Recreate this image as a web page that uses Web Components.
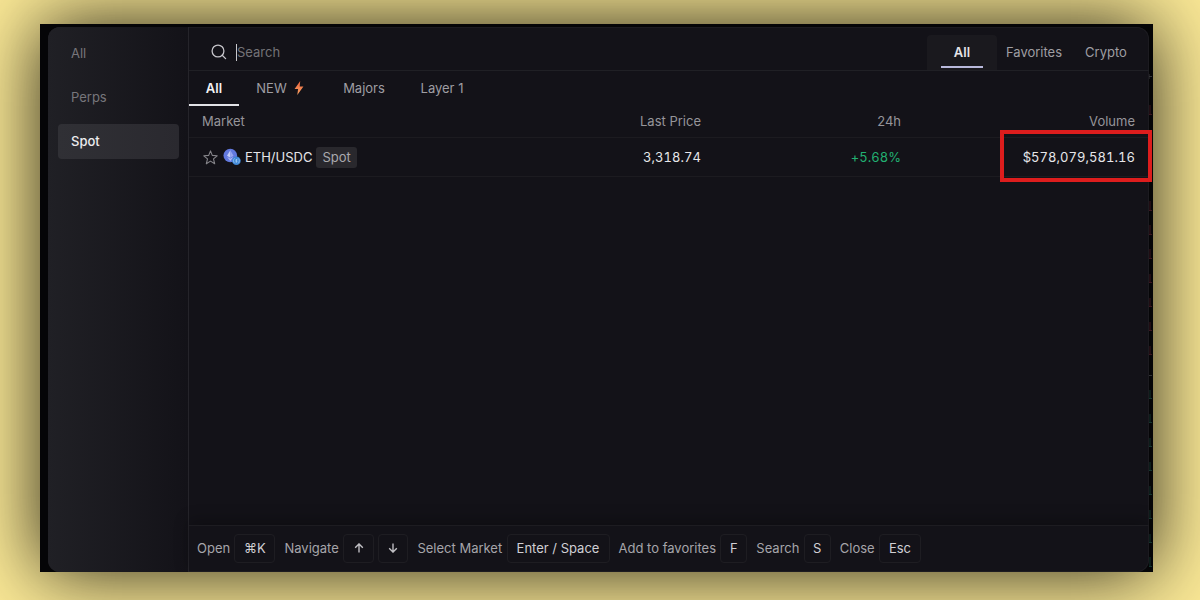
<!DOCTYPE html>
<html lang="en">
<head>
<meta charset="utf-8">
<title>Markets</title>
<style>
    * {
        box-sizing: border-box;
    }
    body {
        margin: 0;
        height: 600px;
        overflow: hidden;
        background: #fbe996;
        font-family: Inter, "Liberation Sans", sans-serif;
        font-size: 13px;
        line-height: 20px;
        color: #9f9ea3;
    }
</style>
</head>
<body>
<app-frame>
    <market-dialog>
        <side-item slot="side">All</side-item>
        <side-item slot="side">Perps</side-item>
        <side-item slot="side" active>Spot</side-item>

        <search-box slot="search" placeholder="Search"></search-box>
        <group-tab slot="groups" active style="width:70px">All</group-tab>
        <group-tab slot="groups" style="width:74px">Favorites</group-tab>
        <group-tab slot="groups" style="width:70px">Crypto</group-tab>

        <filter-tab slot="filters" active style="width:50px">All</filter-tab>
        <filter-tab slot="filters" style="width:82px" hot>NEW</filter-tab>
        <filter-tab slot="filters" style="width:86px">Majors</filter-tab>
        <filter-tab slot="filters" style="width:70px">Layer 1</filter-tab>

        <market-row head>
            <span slot="name">Market</span>
            <span slot="price">Last Price</span>
            <span slot="change">24h</span>
            <span slot="volume">Volume</span>
        </market-row>
        <market-row>
            <market-name slot="name" tag="Spot">ETH/USDC</market-name>
            <span slot="price">3,318.74</span>
            <span slot="change">+5.68%</span>
            <span slot="volume">$578,079,581.16</span>
        </market-row>

        <key-hint slot="keys" keys="⌘K" widths="41">Open</key-hint>
        <key-hint slot="keys" keys="up,down" widths="31,30">Navigate</key-hint>
        <key-hint slot="keys" keys="Enter / Space" widths="103">Select Market</key-hint>
        <key-hint slot="keys" keys="F" widths="27">Add to favorites</key-hint>
        <key-hint slot="keys" keys="S" widths="27">Search</key-hint>
        <key-hint slot="keys" keys="Esc" widths="42">Close</key-hint>
    </market-dialog>
</app-frame>

<script>
class AppFrame extends HTMLElement {

    constructor() {
        super();
        this.shadowDOM = this.attachShadow({mode: "open"});
    }

    connectedCallback() {
        this.render();
    }

    render() {
        this.shadowDOM.innerHTML = `
            <style>
                :host {
                    display: block;
                    padding: 24px 47.5px 28px 40px;
                    height: 600px;
                    box-sizing: border-box;
                }
                .frame {
                    position: relative;
                    box-sizing: border-box;
                    height: 548px;
                    padding: 3px 3.5px 0 8px;
                    background: #050507;
                    box-shadow: 0 0 72px rgba(0, 0, 0, 0.85);
                }
                /* edge of the order book behind the dialog */
                .book {
                    position: absolute;
                    right: 1px;
                    top: 0;
                    width: 3px;
                    height: 548px;
                }
                .mark {
                    position: absolute;
                    z-index: 2;
                    left: 960px;
                    top: 106px;
                    width: 152px;
                    height: 52px;
                    box-sizing: border-box;
                    border: 4px solid #dd1d1d;
                }
            </style>
            <div class="frame">
                <slot></slot>
                <svg class="book" viewBox="0 0 3 548">
                    <path d="M0 52.500h3M0 50v5" stroke="#36363a" fill="none"/>
                    <path d="M1 81v9M1 177v9M1 201v9M1 225v9M1 250v9M1 274v9M1 298v9M1 322v9M0 90.500h3M0 186.500h3M0 210.500h3M0 234.500h3M0 258.500h3M0 282.500h3M0 306.500h3M0 330.500h3" stroke="#3c1620" fill="none"/>
                    <path d="M0 351.500h3" stroke="#303134"/>
                    <path d="M1 366v9M1 390v9M1 414v9M1 438v9M1 462v9M1 486v9M1 510v9M1 533v9M0 374.500h3M0 398.500h3M0 422.500h3M0 446.500h3M0 470.500h3M0 494.500h3M0 518.500h3M0 542.500h3" stroke="#15352f" fill="none"/>
                </svg>
                <div class="mark"></div>
            </div>`;
    }

}

class MarketDialog extends HTMLElement {

    constructor() {
        super();
        this.shadowDOM = this.attachShadow({mode: "open"});
    }

    connectedCallback() {
        this.render();
    }

    render() {
        this.shadowDOM.innerHTML = `
            <style>
                * {
                    box-sizing: border-box;
                }
                :host {
                    display: grid;
                    grid-template-columns: 141px 1fr;
                    height: 545px;
                    border-radius: 12px;
                    overflow: hidden;
                    background: #131218;
                    box-shadow: inset 0 0 0 1px #1c1b20;
                }
                nav {
                    display: flex;
                    flex-direction: column;
                    gap: 9px;
                    padding: 9px 9px 0 10px;
                    border-right: 1px solid #25242a;
                    background: linear-gradient(90deg, #202025, #131218);
                }
                main {
                    display: flex;
                    flex-direction: column;
                    min-width: 0;
                }
                .top {
                    display: flex;
                    justify-content: space-between;
                    height: 44px;
                    padding: 8px 8px 0 22px;
                    border-bottom: 1px solid #202025;
                }
                .groups {
                    display: flex;
                }
                .filters {
                    display: flex;
                    height: 35px;
                }
                .list {
                    flex: 1;
                }
                footer {
                    display: flex;
                    align-items: center;
                    gap: 9px;
                    height: 47px;
                    padding: 0 0 2px 8px;
                    border-top: 1px solid #1d1c21;
                    box-shadow: 0 -5px 14px rgba(0, 0, 0, 0.25);
                    color: #a6a5aa;
                }
            </style>
            <nav><slot name="side"></slot></nav>
            <main>
                <div class="top">
                    <slot name="search"></slot>
                    <div class="groups"><slot name="groups"></slot></div>
                </div>
                <div class="filters"><slot name="filters"></slot></div>
                <div class="list"><slot></slot></div>
                <footer><slot name="keys"></slot></footer>
            </main>`;
    }

}

class SideItem extends HTMLElement {

    constructor() {
        super();
        this.shadowDOM = this.attachShadow({mode: "open"});
    }

    connectedCallback() {
        this.shadowDOM.innerHTML = `
            <style>
                :host {
                    display: flex;
                    align-items: center;
                    box-sizing: border-box;
                    height: 35px;
                    padding: 0 0 1px 13px;
                    border-radius: 4px;
                    color: #77767b;
                }
                :host([active]) {
                    background: linear-gradient(90deg, #303035, #2a292f);
                    color: #ececee;
                    font-weight: 500;
                }
            </style>
            <slot></slot>`;
    }

}

class SearchBox extends HTMLElement {

    constructor() {
        super();
        this.shadowDOM = this.attachShadow({mode: "open"});
    }

    connectedCallback() {
        this.shadowDOM.innerHTML = `
            <style>
                :host {
                    display: flex;
                    align-items: center;
                    height: 34px;
                    color: #737277;
                }
                svg {
                    margin-right: 9px;
                }
                .caret {
                    width: 1px;
                    height: 17px;
                    background: #c8c8cc;
                }
            </style>
            <svg width="16" height="16" viewBox="0 0 16 16" fill="none" stroke="#c5c4c9" stroke-width="1.3" stroke-linecap="round">
                <circle cx="7" cy="7" r="5.900"/>
                <path d="M11.200 11.200L14.600 14.600"/>
            </svg>
            <span class="caret"></span>
            <span>${this.getAttribute("placeholder")}</span>`;
    }

}

class GroupTab extends HTMLElement {

    constructor() {
        super();
        this.shadowDOM = this.attachShadow({mode: "open"});
    }

    connectedCallback() {
        this.shadowDOM.innerHTML = `
            <style>
                :host {
                    display: flex;
                    flex-direction: column;
                    align-items: center;
                    box-sizing: border-box;
                    height: 35px;
                    padding-top: 7px;
                    border-radius: 4px 4px 0 0;
                    white-space: nowrap;
                }
                :host([active]) {
                    background: #1a191e;
                    color: #e4e4e7;
                    font-weight: 600;
                }
                .line {
                    width: 42px;
                    height: 2px;
                    margin-top: 4px;
                }
                :host([active]) .line {
                    background: #b9b9dc;
                }
            </style>
            <slot></slot>
            <div class="line"></div>`;
    }

}

class FilterTab extends HTMLElement {

    constructor() {
        super();
        this.shadowDOM = this.attachShadow({mode: "open"});
    }

    connectedCallback() {
        const bolt = this.hasAttribute("hot") ? `
            <svg width="10" height="14" viewBox="0 0 10 14">
                <defs>
                    <linearGradient id="g" x1="0" y1="0" x2="0" y2="1">
                        <stop offset="0" stop-color="#e9603a"/>
                        <stop offset="1" stop-color="#f9a566"/>
                    </linearGradient>
                </defs>
                <path d="M6.200 0L.6 8h3.500L3.300 14 9.400 5.600H5.700z" fill="url(#g)"/>
            </svg>` : "";
        this.shadowDOM.innerHTML = `
            <style>
                :host {
                    display: flex;
                    align-items: center;
                    justify-content: center;
                    gap: 7px;
                    box-sizing: border-box;
                    height: 35px;
                    border-bottom: 2px solid transparent;
                    white-space: nowrap;
                }
                :host([active]) {
                    border-color: #e2e2e6;
                    color: #f2f2f4;
                    font-weight: 600;
                }
            </style>
            <slot></slot>${bolt}`;
    }

}

class MarketRow extends HTMLElement {

    constructor() {
        super();
        this.shadowDOM = this.attachShadow({mode: "open"});
    }

    connectedCallback() {
        this.shadowDOM.innerHTML = `
            <style>
                :host {
                    display: grid;
                    grid-template-columns: 1fr 200px 200px 234px;
                    align-items: center;
                    box-sizing: border-box;
                    height: 39px;
                    padding: 0 14px 0 13px;
                    border-bottom: 1px solid #1c1b20;
                    color: #e6e6e9;
                }
                :host([head]) {
                    height: 32px;
                    padding-bottom: 1px;
                    color: #96959a;
                }
                :host(:not([head])) .num {
                    font-variant-numeric: tabular-nums;
                    letter-spacing: 0.05px;
                }
                .num {
                    text-align: right;
                }
                :host(:not([head])) .change {
                    color: #22b072;
                }
            </style>
            <div><slot name="name"></slot></div>
            <div class="num"><slot name="price"></slot></div>
            <div class="num change"><slot name="change"></slot></div>
            <div class="num"><slot name="volume"></slot></div>`;
    }

}

class MarketName extends HTMLElement {

    constructor() {
        super();
        this.shadowDOM = this.attachShadow({mode: "open"});
    }

    connectedCallback() {
        this.shadowDOM.innerHTML = `
            <style>
                :host {
                    display: flex;
                    align-items: center;
                }
                .star {
                    margin: 0 5px 0 1px;
                }
                .coins {
                    margin-right: 4px;
                }
                .tag {
                    margin-left: 4px;
                    padding: 0 6px 1px;
                    border-radius: 3px;
                    background: #29282d;
                    color: #aaa9ae;
                }
            </style>
            <svg class="star" width="15" height="15" viewBox="0 0 15 15" fill="none" stroke="#858489" stroke-width="1.1" stroke-linejoin="round">
                <path d="M7.500 .9l1.800 4.500 4.900.4-3.700 3.100 1.200 4.900-4.200-2.700-4.200 2.700 1.200-4.900L.8 5.800l4.900-.4z"/>
            </svg>
            <svg class="coins" width="18" height="18" viewBox="0 0 18 18">
                <circle cx="7.300" cy="7.500" r="6.800" fill="#6279df"/>
                <path d="M7.300 2.300L4 7.800l3.300 2z" fill="#c3ccf8"/>
                <path d="M7.300 2.300l3.200 5.500-3.200 2z" fill="#97a6ee"/>
                <path d="M4 8.800l3.300 4.300 3.200-4.300-3.200 1.900z" fill="#b1bcf4"/>
                <circle cx="13.400" cy="12.800" r="4.300" fill="#3f87d6"/>
                <path d="M11.800 10.300a3 3 0 0 0 0 5M15 10.300a3 3 0 0 1 0 5M13.400 11v3.600M14.400 11.800c-1.600-.8-2.400.7-1 1s.8 1.700-1 1" fill="none" stroke="#b5d6fa" stroke-width=".6"/>
            </svg>
            <slot></slot>
            <span class="tag">${this.getAttribute("tag")}</span>`;
    }

}

const ARROWS = {
    up: "M5.500 10.500V1M1.300 5.200L5.500 1l4.200 4.200",
    down: "M5.500 .5V10M1.300 5.800L5.500 10l4.200-4.200"
};

class KeyHint extends HTMLElement {

    constructor() {
        super();
        this.shadowDOM = this.attachShadow({mode: "open"});
    }

    connectedCallback() {
        const widths = this.getAttribute("widths").split(",");
        const keys = this.getAttribute("keys").split(",").map((key, i) => {
            const face = ARROWS[key]
                ? `<svg width="10" height="10" viewBox="0 0 11 11" fill="none" stroke="#c2c1c6" stroke-width="1.500"><path d="${ARROWS[key]}"/></svg>`
                : key;
            return `<span class="key" style="width:${widths[i]}px">${face}</span>`;
        }).join("");
        this.shadowDOM.innerHTML = `
            <style>
                :host {
                    display: flex;
                    align-items: center;
                    gap: 4.3px;
                    white-space: nowrap;
                    color: #a6a5aa;
                }
                .key {
                    display: flex;
                    align-items: center;
                    justify-content: center;
                    box-sizing: border-box;
                    height: 29px;
                    border: 1px solid #1e1d22;
                    border-radius: 4px;
                    color: #d0cfd4;
                }
            </style>
            <slot></slot>${keys}`;
    }

}

customElements.define("app-frame", AppFrame);
customElements.define("market-dialog", MarketDialog);
customElements.define("side-item", SideItem);
customElements.define("search-box", SearchBox);
customElements.define("group-tab", GroupTab);
customElements.define("filter-tab", FilterTab);
customElements.define("market-row", MarketRow);
customElements.define("market-name", MarketName);
customElements.define("key-hint", KeyHint);
</script>
</body>
</html>
